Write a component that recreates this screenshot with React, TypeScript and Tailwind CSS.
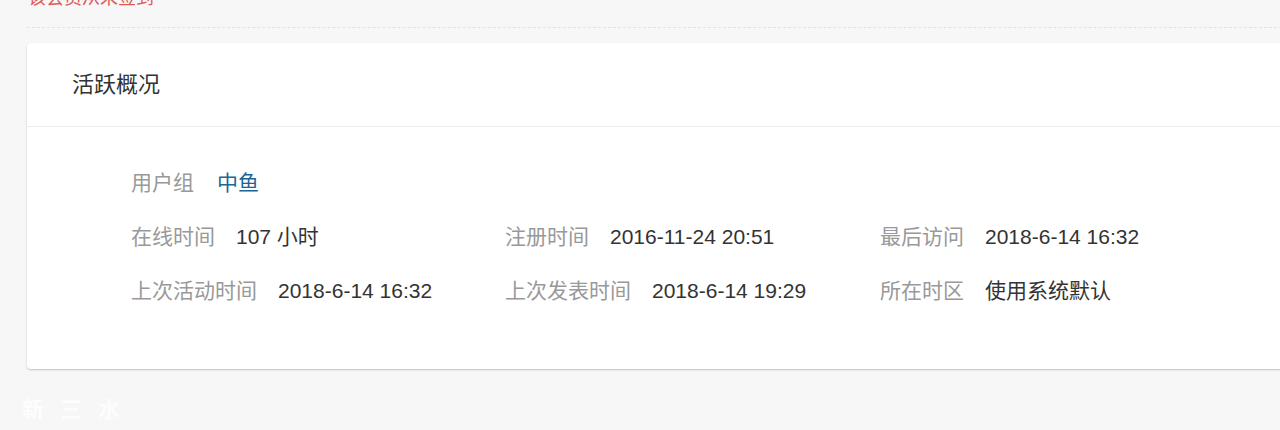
const rows: [string, string][][] = [
	[
		["在线时间", "107 小时"],
		["注册时间", "2016-11-24 20:51"],
		["最后访问", "2018-6-14 16:32"],
	],
	[
		["上次活动时间", "2018-6-14 16:32"],
		["上次发表时间", "2018-6-14 19:29"],
		["所在时区", "使用系统默认"],
	],
];

function Item({ label, value }: { label: string; value: string }) {
	return (
		<div className="flex items-center h-[54px]">
			<span className="text-[#999] mr-[21px]">{label}</span>
			<span className="text-[#333]">{value}</span>
		</div>
	);
}

export default function App() {
	return (
		<div
			className="w-[1280px] h-[430px] overflow-hidden bg-[#f7f7f7] pl-[27px]"
			style={{ fontFamily: '"Liberation Sans", "Noto Sans CJK SC", sans-serif' }}>
			<div className="h-[27px] overflow-hidden">
				<div className="-mt-[11px] pl-px text-[18px] leading-[18px] text-[#dd5a56]">
					该会员从未签到
				</div>
			</div>
			<div className="w-[1300px] border-t border-dashed border-[#e2e2e2]" />

			<div className="mt-[15px] w-[1300px] bg-white rounded-[4px] shadow-[0_1px_2px_rgba(0,0,0,0.22)]">
				<div className="h-[84px] flex items-center pl-[45px] border-b border-[#ececec] text-[22px] text-[#333]">
					活跃概况
				</div>
				<div className="pl-[104px] pt-[29px] pb-[51px] text-[21px]">
					<div className="flex items-center h-[54px]">
						<span className="text-[#999] mr-[23px]">用户组</span>
						<span className="text-[#1a6696]">中鱼</span>
					</div>
					{rows.map((r, i) => (
						<div key={i} className="grid grid-cols-[374px_375px_374px]">
							{r.map(([l, v]) => (
								<Item key={l} label={l} value={v} />
							))}
						</div>
					))}
				</div>
			</div>

			<div
				className="mt-[22px] -ml-[5px] flex gap-[16px] text-[22px] font-bold text-white opacity-80"
				style={{ fontFamily: '"Noto Sans CJK SC", serif' }}>
				<span>新</span>
				<span>三</span>
				<span>水</span>
			</div>
		</div>
	);
}
